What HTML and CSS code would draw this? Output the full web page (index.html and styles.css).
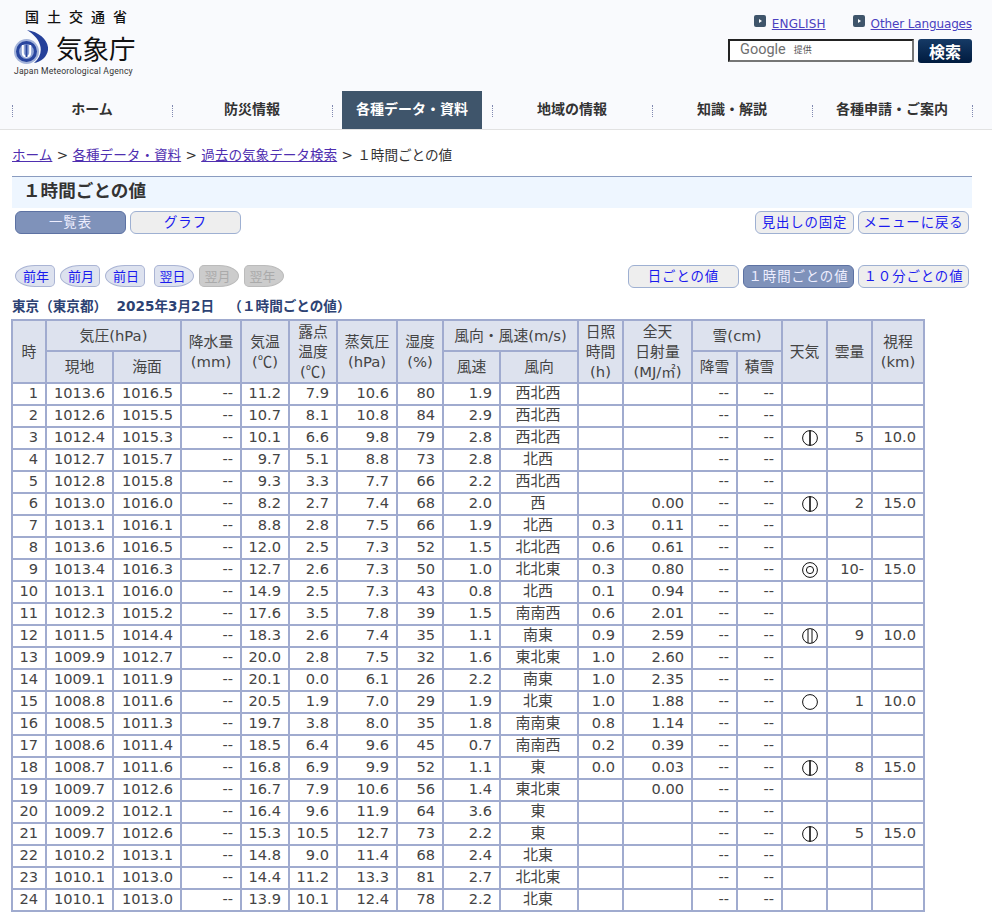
FILE: index.html
```html
<!DOCTYPE html>
<html lang="ja">
<head>
<meta charset="utf-8">
<title>気象庁 | 過去の気象データ検索</title>
<link rel="stylesheet" href="styles.css">
</head>
<body>
<header class="site-head">
  <div class="head-top">
    <div class="logo">
      <div class="ministry">国土交通省</div>
      <div class="logo-main">
        <svg class="emblem" viewBox="0 0 34 36" width="34" height="36" aria-hidden="true">
          <path d="M13 1 C26 3 35 12 34 21 C33 28 27 33 20 34 C26 29 28 22 26 16 C24 9 19 5 13 1Z" fill="#25409a"/>
          <circle cx="12.5" cy="22.5" r="12.5" fill="#a3b3da"/>
          <circle cx="12.5" cy="22.5" r="10.5" fill="#28459e"/>
          <circle cx="12.5" cy="22.5" r="7.4" fill="#8fa3d4"/>
          <path d="M8.8 16 V23.5 C8.8 29 16.2 29 16.2 23.5 V16" fill="none" stroke="#fff" stroke-width="2"/>
          <path d="M12.5 15.5 V28" stroke="#28459e" stroke-width="1.8"/>
        </svg>
        <span class="logo-jma">気象庁</span>
      </div>
      <div class="logo-en">Japan Meteorological Agency</div>
    </div>
    <div class="head-right">
      <div class="langs">
        <span class="lang en"><svg class="lang-ico" viewBox="0 0 12 12" width="12" height="12" aria-hidden="true"><rect width="12" height="12" rx="2" fill="#3f556b"/><path d="M5 4 L8 6 L5 8Z" fill="#fff"/></svg><a href="#">ENGLISH</a></span>
        <span class="lang other"><svg class="lang-ico" viewBox="0 0 12 12" width="12" height="12" aria-hidden="true"><rect width="12" height="12" rx="2" fill="#3f556b"/><path d="M5 4 L8 6 L5 8Z" fill="#fff"/></svg><a href="#">Other Languages</a></span>
      </div>
      <div class="search">
        <div class="search-box"><span class="g-word">Google</span><span class="g-by">提供</span></div>
        <button class="search-btn" type="button">検索</button>
      </div>
    </div>
  </div>
  <nav class="gnav">
    <i class="sep"></i><a class="nav-item" href="#"><span>ホーム</span></a>
    <i class="sep"></i><a class="nav-item" href="#"><span>防災情報</span></a>
    <i class="sep"></i><a class="nav-item active" href="#"><span>各種データ・資料</span></a>
    <i class="sep"></i><a class="nav-item" href="#"><span>地域の情報</span></a>
    <i class="sep"></i><a class="nav-item" href="#"><span>知識・解説</span></a>
    <i class="sep"></i><a class="nav-item" href="#"><span>各種申請・ご案内</span></a>
    <i class="sep"></i>
  </nav>
</header>
<main class="main">
  <div class="crumbs"><a href="#">ホーム</a> &gt; <a href="#">各種データ・資料</a> &gt; <a href="#">過去の気象データ検索</a> &gt; １時間ごとの値</div>
  <h1 class="title">１時間ごとの値</h1>
  <div class="btn-row first">
    <div class="btn-group">
      <a class="btn on" href="#">一覧表</a>
      <a class="btn" href="#">グラフ</a>
    </div>
    <div class="btn-group">
      <a class="btn short" href="#">見出しの固定</a>
      <a class="btn" href="#">メニューに戻る</a>
    </div>
  </div>
  <div class="btn-row second">
    <div class="day-group">
      <a class="day prev" href="#">前年</a>
      <a class="day prev" href="#">前月</a>
      <a class="day prev" href="#">前日</a>
      <a class="day next gap" href="#">翌日</a>
      <span class="day next off">翌月</span>
      <span class="day next off">翌年</span>
    </div>
    <div class="btn-group">
      <a class="btn" href="#">日ごとの値</a>
      <a class="btn on" href="#">１時間ごとの値</a>
      <a class="btn" href="#">１０分ごとの値</a>
    </div>
  </div>
  <div class="caption">東京（東京都）&nbsp; 2025年3月2日 &nbsp; （１時間ごとの値）</div>
  <table class="data">
    <colgroup>
      <col class="w34"><col class="w67"><col class="w68"><col class="w60"><col class="w48"><col class="w48"><col class="w60"><col class="w46"><col class="w57"><col class="w78"><col class="w45"><col class="w69"><col class="w45"><col class="w45"><col class="w45"><col class="w45"><col class="w52">
    </colgroup>
    <thead>
      <tr class="h1">
        <th rowspan="2">時</th><th colspan="2">気圧(hPa)</th><th rowspan="2">降水量<br>(mm)</th><th rowspan="2">気温<br>(<span class="cjk">℃</span>)</th><th rowspan="2">露点<br>温度<br>(<span class="cjk">℃</span>)</th><th rowspan="2">蒸気圧<br>(hPa)</th><th rowspan="2">湿度<br>(%)</th><th colspan="2">風向・風速(m/s)</th><th rowspan="2">日照<br>時間<br>(h)</th><th rowspan="2">全天<br>日射量<br>(MJ/<span class="cjk">㎡</span>)</th><th colspan="2">雪(cm)</th><th rowspan="2">天気</th><th rowspan="2">雲量</th><th rowspan="2">視程<br>(km)</th>
      </tr>
      <tr class="h2"><th>現地</th><th>海面</th><th>風速</th><th>風向</th><th>降雪</th><th>積雪</th></tr>
    </thead>
    <tbody>
      <tr><td>1</td><td>1013.6</td><td>1016.5</td><td>--</td><td>11.2</td><td>7.9</td><td>10.6</td><td>80</td><td>1.9</td><td class="ctr">西北西</td><td></td><td></td><td>--</td><td>--</td><td></td><td></td><td></td></tr>
      <tr><td>2</td><td>1012.6</td><td>1015.5</td><td>--</td><td>10.7</td><td>8.1</td><td>10.8</td><td>84</td><td>2.9</td><td class="ctr">西北西</td><td></td><td></td><td>--</td><td>--</td><td></td><td></td><td></td></tr>
      <tr><td>3</td><td>1012.4</td><td>1015.3</td><td>--</td><td>10.1</td><td>6.6</td><td>9.8</td><td>79</td><td>2.8</td><td class="ctr">西北西</td><td></td><td></td><td>--</td><td>--</td><td class="wxc"><svg class="wx" viewBox="0 0 16 16"><circle cx="8" cy="8" r="7.4"/><path d="M8 .6V15.4" class="thick"/></svg></td><td>5</td><td>10.0</td></tr>
      <tr><td>4</td><td>1012.7</td><td>1015.7</td><td>--</td><td>9.7</td><td>5.1</td><td>8.8</td><td>73</td><td>2.8</td><td class="ctr">北西</td><td></td><td></td><td>--</td><td>--</td><td></td><td></td><td></td></tr>
      <tr><td>5</td><td>1012.8</td><td>1015.8</td><td>--</td><td>9.3</td><td>3.3</td><td>7.7</td><td>66</td><td>2.2</td><td class="ctr">西北西</td><td></td><td></td><td>--</td><td>--</td><td></td><td></td><td></td></tr>
      <tr><td>6</td><td>1013.0</td><td>1016.0</td><td>--</td><td>8.2</td><td>2.7</td><td>7.4</td><td>68</td><td>2.0</td><td class="ctr">西</td><td></td><td>0.00</td><td>--</td><td>--</td><td class="wxc"><svg class="wx" viewBox="0 0 16 16"><circle cx="8" cy="8" r="7.4"/><path d="M8 .6V15.4" class="thick"/></svg></td><td>2</td><td>15.0</td></tr>
      <tr><td>7</td><td>1013.1</td><td>1016.1</td><td>--</td><td>8.8</td><td>2.8</td><td>7.5</td><td>66</td><td>1.9</td><td class="ctr">北西</td><td>0.3</td><td>0.11</td><td>--</td><td>--</td><td></td><td></td><td></td></tr>
      <tr><td>8</td><td>1013.6</td><td>1016.5</td><td>--</td><td>12.0</td><td>2.5</td><td>7.3</td><td>52</td><td>1.5</td><td class="ctr">北北西</td><td>0.6</td><td>0.61</td><td>--</td><td>--</td><td></td><td></td><td></td></tr>
      <tr><td>9</td><td>1013.4</td><td>1016.3</td><td>--</td><td>12.7</td><td>2.6</td><td>7.3</td><td>50</td><td>1.0</td><td class="ctr">北北東</td><td>0.3</td><td>0.80</td><td>--</td><td>--</td><td class="wxc"><svg class="wx" viewBox="0 0 16 16"><circle cx="8" cy="8" r="7.4"/><circle cx="8" cy="8" r="3.6"/></svg></td><td>10-</td><td>15.0</td></tr>
      <tr><td>10</td><td>1013.1</td><td>1016.0</td><td>--</td><td>14.9</td><td>2.5</td><td>7.3</td><td>43</td><td>0.8</td><td class="ctr">北西</td><td>0.1</td><td>0.94</td><td>--</td><td>--</td><td></td><td></td><td></td></tr>
      <tr><td>11</td><td>1012.3</td><td>1015.2</td><td>--</td><td>17.6</td><td>3.5</td><td>7.8</td><td>39</td><td>1.5</td><td class="ctr">南南西</td><td>0.6</td><td>2.01</td><td>--</td><td>--</td><td></td><td></td><td></td></tr>
      <tr><td>12</td><td>1011.5</td><td>1014.4</td><td>--</td><td>18.3</td><td>2.6</td><td>7.4</td><td>35</td><td>1.1</td><td class="ctr">南東</td><td>0.9</td><td>2.59</td><td>--</td><td>--</td><td class="wxc"><svg class="wx" viewBox="0 0 16 16"><circle cx="8" cy="8" r="7.4"/><path d="M6 1V15M10 1V15"/></svg></td><td>9</td><td>10.0</td></tr>
      <tr><td>13</td><td>1009.9</td><td>1012.7</td><td>--</td><td>20.0</td><td>2.8</td><td>7.5</td><td>32</td><td>1.6</td><td class="ctr">東北東</td><td>1.0</td><td>2.60</td><td>--</td><td>--</td><td></td><td></td><td></td></tr>
      <tr><td>14</td><td>1009.1</td><td>1011.9</td><td>--</td><td>20.1</td><td>0.0</td><td>6.1</td><td>26</td><td>2.2</td><td class="ctr">南東</td><td>1.0</td><td>2.35</td><td>--</td><td>--</td><td></td><td></td><td></td></tr>
      <tr><td>15</td><td>1008.8</td><td>1011.6</td><td>--</td><td>20.5</td><td>1.9</td><td>7.0</td><td>29</td><td>1.9</td><td class="ctr">北東</td><td>1.0</td><td>1.88</td><td>--</td><td>--</td><td class="wxc"><svg class="wx" viewBox="0 0 16 16"><circle cx="8" cy="8" r="7.4"/></svg></td><td>1</td><td>10.0</td></tr>
      <tr><td>16</td><td>1008.5</td><td>1011.3</td><td>--</td><td>19.7</td><td>3.8</td><td>8.0</td><td>35</td><td>1.8</td><td class="ctr">南南東</td><td>0.8</td><td>1.14</td><td>--</td><td>--</td><td></td><td></td><td></td></tr>
      <tr><td>17</td><td>1008.6</td><td>1011.4</td><td>--</td><td>18.5</td><td>6.4</td><td>9.6</td><td>45</td><td>0.7</td><td class="ctr">南南西</td><td>0.2</td><td>0.39</td><td>--</td><td>--</td><td></td><td></td><td></td></tr>
      <tr><td>18</td><td>1008.7</td><td>1011.6</td><td>--</td><td>16.8</td><td>6.9</td><td>9.9</td><td>52</td><td>1.1</td><td class="ctr">東</td><td>0.0</td><td>0.03</td><td>--</td><td>--</td><td class="wxc"><svg class="wx" viewBox="0 0 16 16"><circle cx="8" cy="8" r="7.4"/><path d="M8 .6V15.4" class="thick"/></svg></td><td>8</td><td>15.0</td></tr>
      <tr><td>19</td><td>1009.7</td><td>1012.6</td><td>--</td><td>16.7</td><td>7.9</td><td>10.6</td><td>56</td><td>1.4</td><td class="ctr">東北東</td><td></td><td>0.00</td><td>--</td><td>--</td><td></td><td></td><td></td></tr>
      <tr><td>20</td><td>1009.2</td><td>1012.1</td><td>--</td><td>16.4</td><td>9.6</td><td>11.9</td><td>64</td><td>3.6</td><td class="ctr">東</td><td></td><td></td><td>--</td><td>--</td><td></td><td></td><td></td></tr>
      <tr><td>21</td><td>1009.7</td><td>1012.6</td><td>--</td><td>15.3</td><td>10.5</td><td>12.7</td><td>73</td><td>2.2</td><td class="ctr">東</td><td></td><td></td><td>--</td><td>--</td><td class="wxc"><svg class="wx" viewBox="0 0 16 16"><circle cx="8" cy="8" r="7.4"/><path d="M8 .6V15.4" class="thick"/></svg></td><td>5</td><td>15.0</td></tr>
      <tr><td>22</td><td>1010.2</td><td>1013.1</td><td>--</td><td>14.8</td><td>9.0</td><td>11.4</td><td>68</td><td>2.4</td><td class="ctr">北東</td><td></td><td></td><td>--</td><td>--</td><td></td><td></td><td></td></tr>
      <tr><td>23</td><td>1010.1</td><td>1013.0</td><td>--</td><td>14.4</td><td>11.2</td><td>13.3</td><td>81</td><td>2.7</td><td class="ctr">北北東</td><td></td><td></td><td>--</td><td>--</td><td></td><td></td><td></td></tr>
      <tr><td>24</td><td>1010.1</td><td>1013.0</td><td>--</td><td>13.9</td><td>10.1</td><td>12.4</td><td>78</td><td>2.2</td><td class="ctr">北東</td><td></td><td></td><td>--</td><td>--</td><td></td><td></td><td></td></tr>
    </tbody>
  </table>
</main>
</body>
</html>
```
FILE: styles.css
```css
* { box-sizing: border-box; }
html, body { margin: 0; padding: 0; background: #fff; }
body {
  font-family: "DejaVu Sans", "Noto Sans CJK JP", sans-serif;
  font-size: 14px;
  color: #333;
}
a { color: #4f2fb0; }

.site-head { background: #f9fafd; border-bottom: 1px solid #e2e2e2; height: 130px; }
.head-top { display: flex; justify-content: space-between; height: 91px; padding: 0 20px 0 14px; }

.logo { width: 124px; padding-top: 7px; color: #111; font-family: "Noto Sans CJK JP", sans-serif; }
.ministry { font-size: 14px; line-height: 18px; letter-spacing: 8px; padding-left: 11px; white-space: nowrap; font-weight: 500; }
.logo-main { display: flex; align-items: flex-end; height: 36px; margin-top: 4px; }
.emblem { display: block; flex: none; width: 34px; height: 36px; }
.logo-jma { font-size: 26.5px; line-height: 30px; margin: 0 0 2px 8px; white-space: nowrap; }
.logo-en { font-family: "Roboto", sans-serif; font-size: 8.6px; line-height: 12px; white-space: nowrap; letter-spacing: .2px; color: #333; }

.head-right { width: 244px; padding-top: 14px; }
.langs { display: flex; justify-content: flex-end; gap: 27px; font-size: 12px; line-height: 18px; height: 25px; }
.lang { display: flex; align-items: flex-start; white-space: nowrap; }
.lang a { color: #4a3fc0; margin-top: 1px; }
.lang.en a { letter-spacing: .15px; }
.lang.other a { letter-spacing: -.13px; }
.lang-ico { display: block; margin: 1px 6px 0 0; }
.search { display: flex; justify-content: space-between; align-items: flex-start; }
.search-box {
  width: 186px; height: 23px; background: #fff;
  border: 2px solid; border-color: #222 #767676 #767676 #222;
  display: flex; align-items: center; padding: 0 0 2px 10px;
}
.g-word { font-family: "Roboto", sans-serif; font-size: 14.5px; color: #6f6f6f; }
.g-by { font-family: "Noto Sans CJK JP", sans-serif; font-size: 9px; color: #555; margin-left: 8px; }
.search-btn {
  width: 54px; height: 24px; padding: 0; border: 0; border-radius: 3px;
  background: linear-gradient(#163a66, #001b3f);
  color: #fff; font: 700 16px/23px "Noto Sans CJK JP", sans-serif;
}

.gnav { display: flex; align-items: center; height: 38px; padding-left: 12px; }
.sep { flex: none; width: 1px; height: 12px; border-left: 1px dotted #8088b0; margin-top: 2px; }
.nav-item {
  flex: none; width: 159px; height: 38px; padding: 0 10px 0 9px; text-decoration: none; color: #333;
  font-family: "Noto Sans CJK JP", sans-serif; font-weight: 700; font-size: 14px;
}
.nav-item span { display: block; height: 38px; line-height: 35px; text-align: center; }
.nav-item.active span { background: #3f556b; color: #fff; }

.main { padding: 0 20px 0 12px; }
.crumbs { font-size: 13.6px; line-height: 20px; padding-top: 15px; height: 46px; white-space: nowrap; }
.title {
  margin: 0; height: 32px; padding-left: 11px;
  background: #eef6ff; border-top: 1px solid #8a9cc0;
  font: 700 17.6px/26px "Noto Sans CJK JP", sans-serif; color: #333;
}
.btn-row { display: flex; justify-content: space-between; padding: 0 3px; }
.btn-row.first { margin-top: 3px; height: 23px; }
.btn-row.second { margin-top: 31px; height: 23px; }
.btn-group { display: flex; gap: 4px; }
.btn {
  display: block; width: 111px; height: 23px; border: 1px solid #9eb0d2; border-radius: 6px;
  background: #eee; color: #1a1aee; text-decoration: none; text-align: center;
  font: 13.4px/19px "Noto Sans CJK JP", sans-serif; letter-spacing: .9px;
}
.btn.short { width: 99px; }
.btn.on { background: #7f92ba; border-color: #5d72a3; color: #eef; }

.day-group { display: flex; gap: 5px; }
.day {
  display: block; width: 40px; height: 22px; border: 1px solid #aab4d4; background: #dde2ef;
  color: #1a1aee; text-decoration: none; text-align: center;
  font: 13px/19px "Noto Sans CJK JP", sans-serif;
}
.day.prev { border-radius: 20px 5px 5px 20px / 11px 5px 5px 11px; padding-left: 2px; }
.day.next { border-radius: 5px 20px 20px 5px / 5px 11px 11px 5px; padding-right: 3px; }
.day.gap { margin-left: 4px; }
.day.off { background: #ccc; border-color: #bbb; color: #aaa; }

.caption { margin-top: 7px; height: 24px; color: #2d4273; font: 700 13.6px/22px "DejaVu Sans", "Noto Sans CJK JP", sans-serif; white-space: nowrap; }

.data { border-collapse: collapse; table-layout: fixed; width: 912px; margin-left: -1px; font-size: 14.4px; color: #444; }
.data th, .data td { border: 2px solid #a0abcf; padding: 0; }
.data th { background: #dde2ee; font-weight: 400; text-align: center; line-height: 20px; font-size: 14.8px; }
.data th .cjk { font-family: "Noto Sans CJK JP", sans-serif; font-size: 14.4px; line-height: 18px; }
.data tbody tr { height: 22px; }
.data td { text-align: right; padding: 0 7px 2px 0; line-height: 18px; white-space: nowrap; height: 22px; font-size: 14.6px; }
.data td.ctr { text-align: center; padding: 0 2px 2px 0; font-size: 15px; }
.data td.wxc { padding: 0 8px 0 0; }
.h1 { height: 31px; }
.h2 { height: 32px; }
.wx { display: block; width: 16px; height: 16px; margin-left: auto; fill: none; stroke: #111; stroke-width: 1; }
.wx .thick { stroke-width: 1.6; }

.w34 { width: 34px; } .w67 { width: 67px; } .w68 { width: 68px; } .w60 { width: 60px; }
.w48 { width: 48px; } .w46 { width: 46px; } .w57 { width: 57px; } .w78 { width: 78px; }
.w45 { width: 45px; } .w69 { width: 69px; } .w52 { width: 52px; }
```
